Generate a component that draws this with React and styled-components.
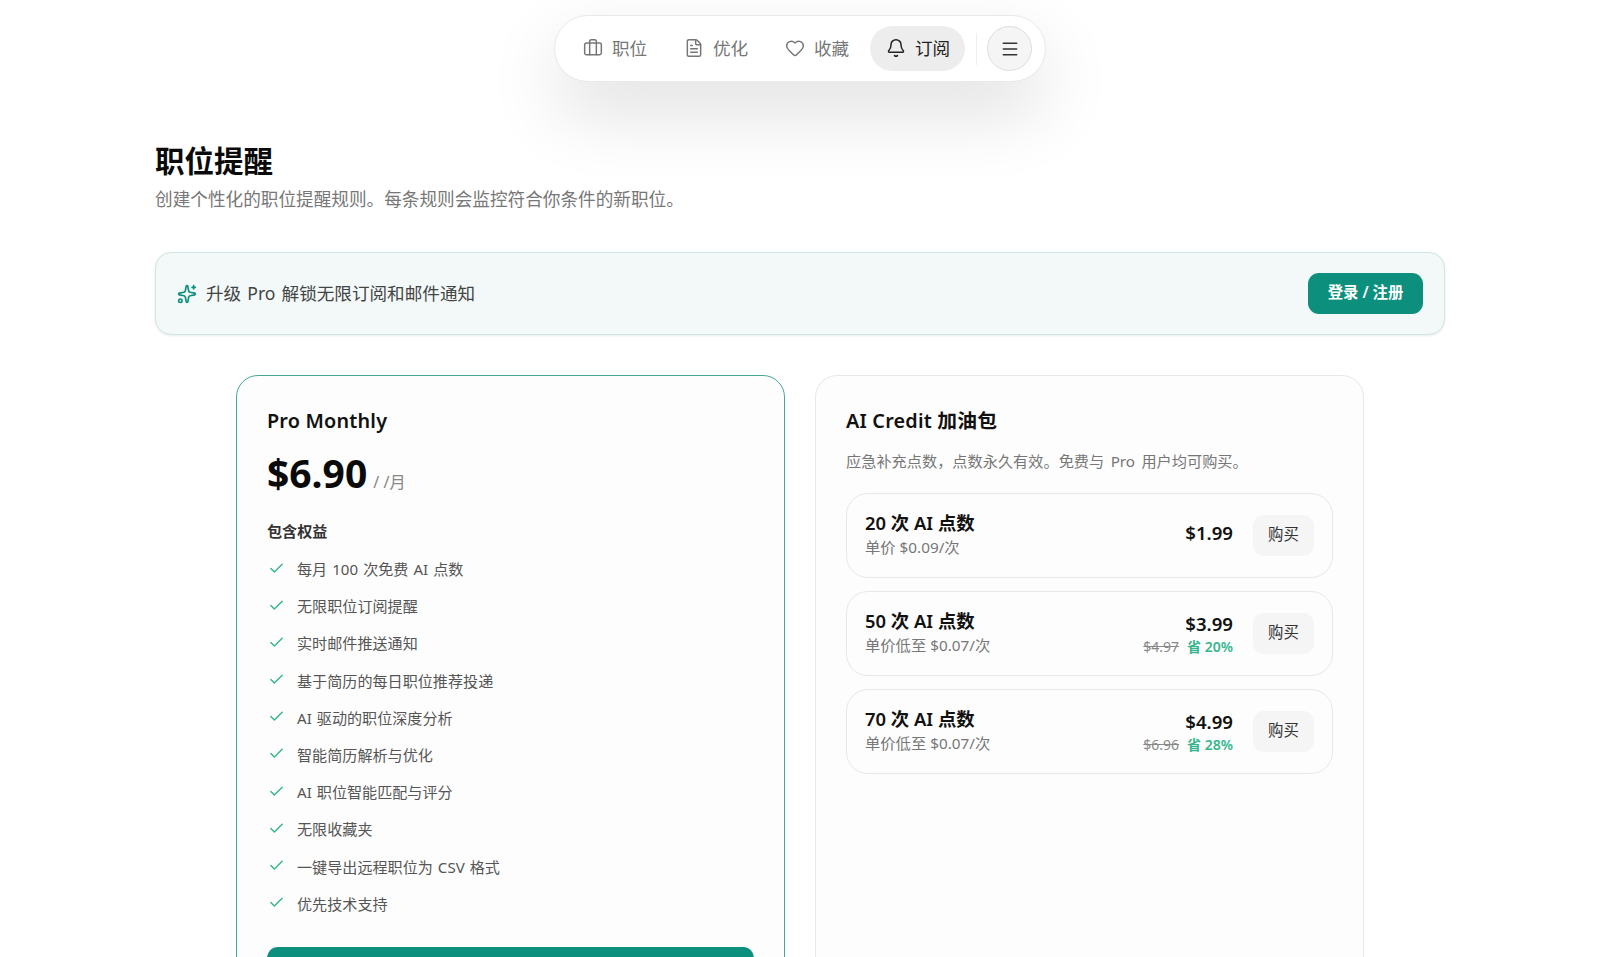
import React from 'react';
import styled, { createGlobalStyle } from 'styled-components';
import { Briefcase, FileText, Heart, Bell, Menu, Sparkles, Check } from 'lucide-react';

const GlobalStyle = createGlobalStyle`
  html, body {
    margin: 0;
    padding: 0;
    background: #fff;
    overflow: hidden;
  }
  body {
    font-family: "Noto Sans", "Noto Sans CJK SC", sans-serif;
    color: #111;
  }
  * { box-sizing: border-box; }
`;

const Page = styled.div`
  width: 1600px;
  height: 957px;
  overflow: hidden;
`;

const Header = styled.header`
  display: flex;
  justify-content: center;
  padding-top: 15px;
`;

const NavPill = styled.nav`
  display: flex;
  align-items: center;
  width: 492px;
  height: 67px;
  padding: 0 13px 0 12px;
  background: #fff;
  border: 1px solid #e9e9e9;
  border-radius: 34px;
  box-shadow: 0 30px 72px rgba(0, 0, 0, 0.13);
`;

const NavItem = styled.a`
  display: flex;
  align-items: center;
  gap: 9px;
  width: 95px;
  height: 45px;
  margin-right: 6px;
  padding: 0 0 2px 16px;
  border-radius: 23px;
  font-size: 17.6px;
  color: ${(p) => (p.$active ? '#222' : '#777')};
  background: ${(p) => (p.$active ? '#ededed' : 'transparent')};

  svg {
    flex: none;
  }
`;

const NavDivider = styled.span`
  width: 1px;
  height: 32px;
  margin: 0 10px 0 5px;
  background: #eee;
`;

const MenuButton = styled.button`
  display: flex;
  align-items: center;
  justify-content: center;
  width: 45px;
  height: 45px;
  padding: 0;
  background: #f5f5f5;
  border: 1px solid #dedede;
  border-radius: 50%;
  color: #333;
`;

const Main = styled.main`
  width: 1290px;
  margin: 0 auto;
`;

const Title = styled.h1`
  margin: 59px 0 0;
  font-size: 29.5px;
  line-height: 40px;
  font-weight: 700;
  color: #0a0a0a;
`;

const Subtitle = styled.p`
  margin: 6px 0 0;
  font-size: 17.64px;
  line-height: 24px;
  color: #777;
`;

const Banner = styled.div`
  display: flex;
  align-items: center;
  justify-content: space-between;
  height: 83px;
  margin-top: 41px;
  padding: 0 21px;
  background: #f2f9f8;
  border: 1.5px solid #cfe6e3;
  border-radius: 16px;
  box-shadow: 0 1px 3px rgba(0, 0, 0, 0.08);
`;

const BannerText = styled.div`
  display: flex;
  align-items: center;
  gap: 9px;
  font-size: 17.6px;
  word-spacing: 1.5px;
  color: #444;

  svg {
    color: #0c8f7c;
  }

  span {
    margin-top: -3px;
  }
`;

const LoginButton = styled.button`
  width: 115px;
  height: 41px;
  padding: 0 0 4px;
  border: none;
  border-radius: 11px;
  background: #0c8f7c;
  color: #fff;
  font-family: inherit;
  font-size: 15.4px;
  font-weight: 600;
`;

const Plans = styled.section`
  display: flex;
  justify-content: center;
  gap: 30px;
  margin-top: 40px;
`;

const Card = styled.article`
  width: 549px;
  height: 640px;
  flex: none;
  padding: 29px 30px;
  background: #fdfdfd;
  border: 1.5px solid ${(p) => (p.$featured ? '#45a898' : '#e8e8e8')};
  border-radius: 22px;
`;

const CardTitle = styled.h2`
  margin: 0;
  font-size: 19.8px;
  letter-spacing: 0.2px;
  line-height: 32px;
  font-weight: 600;
  color: #111;
`;

const PriceRow = styled.div`
  display: flex;
  align-items: baseline;
  gap: 6px;
  margin-top: 9px;
  height: 54px;
`;

const Price = styled.span`
  font-size: 39px;
  line-height: 54px;
  font-weight: 700;
  color: #0a0a0a;
`;

const PriceUnit = styled.span`
  font-size: 16.2px;
  color: #888;
`;

const BenefitLabel = styled.div`
  margin-top: 19px;
  font-size: 15.1px;
  line-height: 24px;
  font-weight: 600;
  color: #333;
`;

const BenefitList = styled.ul`
  display: flex;
  flex-direction: column;
  gap: 13.2px;
  margin: 13px 0 0;
  padding: 0;
  list-style: none;
`;

const Benefit = styled.li`
  display: flex;
  align-items: center;
  gap: 12px;
  height: 24px;
  font-size: 15.1px;
  word-spacing: 1.1px;
  color: #555;

  svg {
    flex: none;
    margin-left: 1px;
    color: #36b58c;
  }
`;

const SubscribeButton = styled.button`
  display: block;
  width: 100%;
  height: 52px;
  margin-top: 32px;
  border: none;
  border-radius: 11px;
  background: #0c8f7c;
`;

const CardDesc = styled.p`
  margin: 12px 0 0;
  font-size: 15.2px;
  word-spacing: 2.5px;
  line-height: 24px;
  color: #777;
`;

const PackList = styled.div`
  display: flex;
  flex-direction: column;
  gap: 13px;
  margin-top: 19.5px;
`;

const Pack = styled.div`
  display: flex;
  align-items: center;
  height: 85px;
  padding: 0 18px;
  background: #fdfdfd;
  border: 1.5px solid #e8e8e8;
  border-radius: 22px;
`;

const PackInfo = styled.div`
  flex: 1;
`;

const PackName = styled.div`
  font-size: 18.4px;
  line-height: 24px;
  font-weight: 600;
  color: #111;
`;

const PackNote = styled.div`
  font-size: 15.3px;
  line-height: 25px;
  color: #777;
`;

const PackPrice = styled.div`
  display: flex;
  flex-direction: column;
  align-items: flex-end;
  margin-right: 20px;
  margin-bottom: ${(p) => (p.$solo ? '5px' : '0')};
`;

const PackAmount = styled.div`
  font-size: 18.6px;
  line-height: 26px;
  font-weight: 600;
  color: #111;
`;

const PackDeal = styled.div`
  display: flex;
  gap: 8px;
  margin-top: 1px;
  font-size: 14px;
  line-height: 18px;
`;

const OldPrice = styled.s`
  color: #888;
`;

const Saving = styled.span`
  font-weight: 600;
  color: #36b58c;
`;

const BuyButton = styled.button`
  width: 61px;
  height: 41px;
  padding: 0 0 3px;
  border: none;
  border-radius: 11px;
  background: #f5f5f5;
  color: #333;
  font-family: inherit;
  font-size: 15.4px;
`;

const navItems = [
  { label: '职位', icon: Briefcase },
  { label: '优化', icon: FileText },
  { label: '收藏', icon: Heart },
  { label: '订阅', icon: Bell, active: true },
];

const benefits = [
  '每月 100 次免费 AI 点数',
  '无限职位订阅提醒',
  '实时邮件推送通知',
  '基于简历的每日职位推荐投递',
  'AI 驱动的职位深度分析',
  '智能简历解析与优化',
  'AI 职位智能匹配与评分',
  '无限收藏夹',
  '一键导出远程职位为 CSV 格式',
  '优先技术支持',
];

const packs = [
  { name: '20 次 AI 点数', note: '单价 $0.09/次', price: '$1.99' },
  { name: '50 次 AI 点数', note: '单价低至 $0.07/次', price: '$3.99', old: '$4.97', save: '省 20%' },
  { name: '70 次 AI 点数', note: '单价低至 $0.07/次', price: '$4.99', old: '$6.96', save: '省 28%' },
];

export default function App() {
  return (
    <Page>
      <GlobalStyle />
      <Header>
        <NavPill>
          {navItems.map(({ label, icon: Icon, active }) => (
            <NavItem key={label} $active={active}>
              <Icon size={20} strokeWidth={1.8} />
              {label}
            </NavItem>
          ))}
          <NavDivider />
          <MenuButton>
            <Menu size={20} strokeWidth={1.8} />
          </MenuButton>
        </NavPill>
      </Header>
      <Main>
        <Title>职位提醒</Title>
        <Subtitle>创建个性化的职位提醒规则。每条规则会监控符合你条件的新职位。</Subtitle>
        <Banner>
          <BannerText>
            <Sparkles size={20} strokeWidth={2} />
            <span>升级 Pro 解锁无限订阅和邮件通知</span>
          </BannerText>
          <LoginButton>登录 / 注册</LoginButton>
        </Banner>
        <Plans>
          <Card $featured>
            <CardTitle>Pro Monthly</CardTitle>
            <PriceRow>
              <Price>$6.90</Price>
              <PriceUnit>/ /月</PriceUnit>
            </PriceRow>
            <BenefitLabel>包含权益</BenefitLabel>
            <BenefitList>
              {benefits.map((text) => (
                <Benefit key={text}>
                  <Check size={17} strokeWidth={2} />
                  {text}
                </Benefit>
              ))}
            </BenefitList>
            <SubscribeButton />
          </Card>
          <Card>
            <CardTitle>AI Credit 加油包</CardTitle>
            <CardDesc>应急补充点数，点数永久有效。免费与 Pro 用户均可购买。</CardDesc>
            <PackList>
              {packs.map((pack) => (
                <Pack key={pack.name}>
                  <PackInfo>
                    <PackName>{pack.name}</PackName>
                    <PackNote>{pack.note}</PackNote>
                  </PackInfo>
                  <PackPrice $solo={!pack.old}>
                    <PackAmount>{pack.price}</PackAmount>
                    {pack.old && (
                      <PackDeal>
                        <OldPrice>{pack.old}</OldPrice>
                        <Saving>{pack.save}</Saving>
                      </PackDeal>
                    )}
                  </PackPrice>
                  <BuyButton>购买</BuyButton>
                </Pack>
              ))}
            </PackList>
          </Card>
        </Plans>
      </Main>
    </Page>
  );
}
